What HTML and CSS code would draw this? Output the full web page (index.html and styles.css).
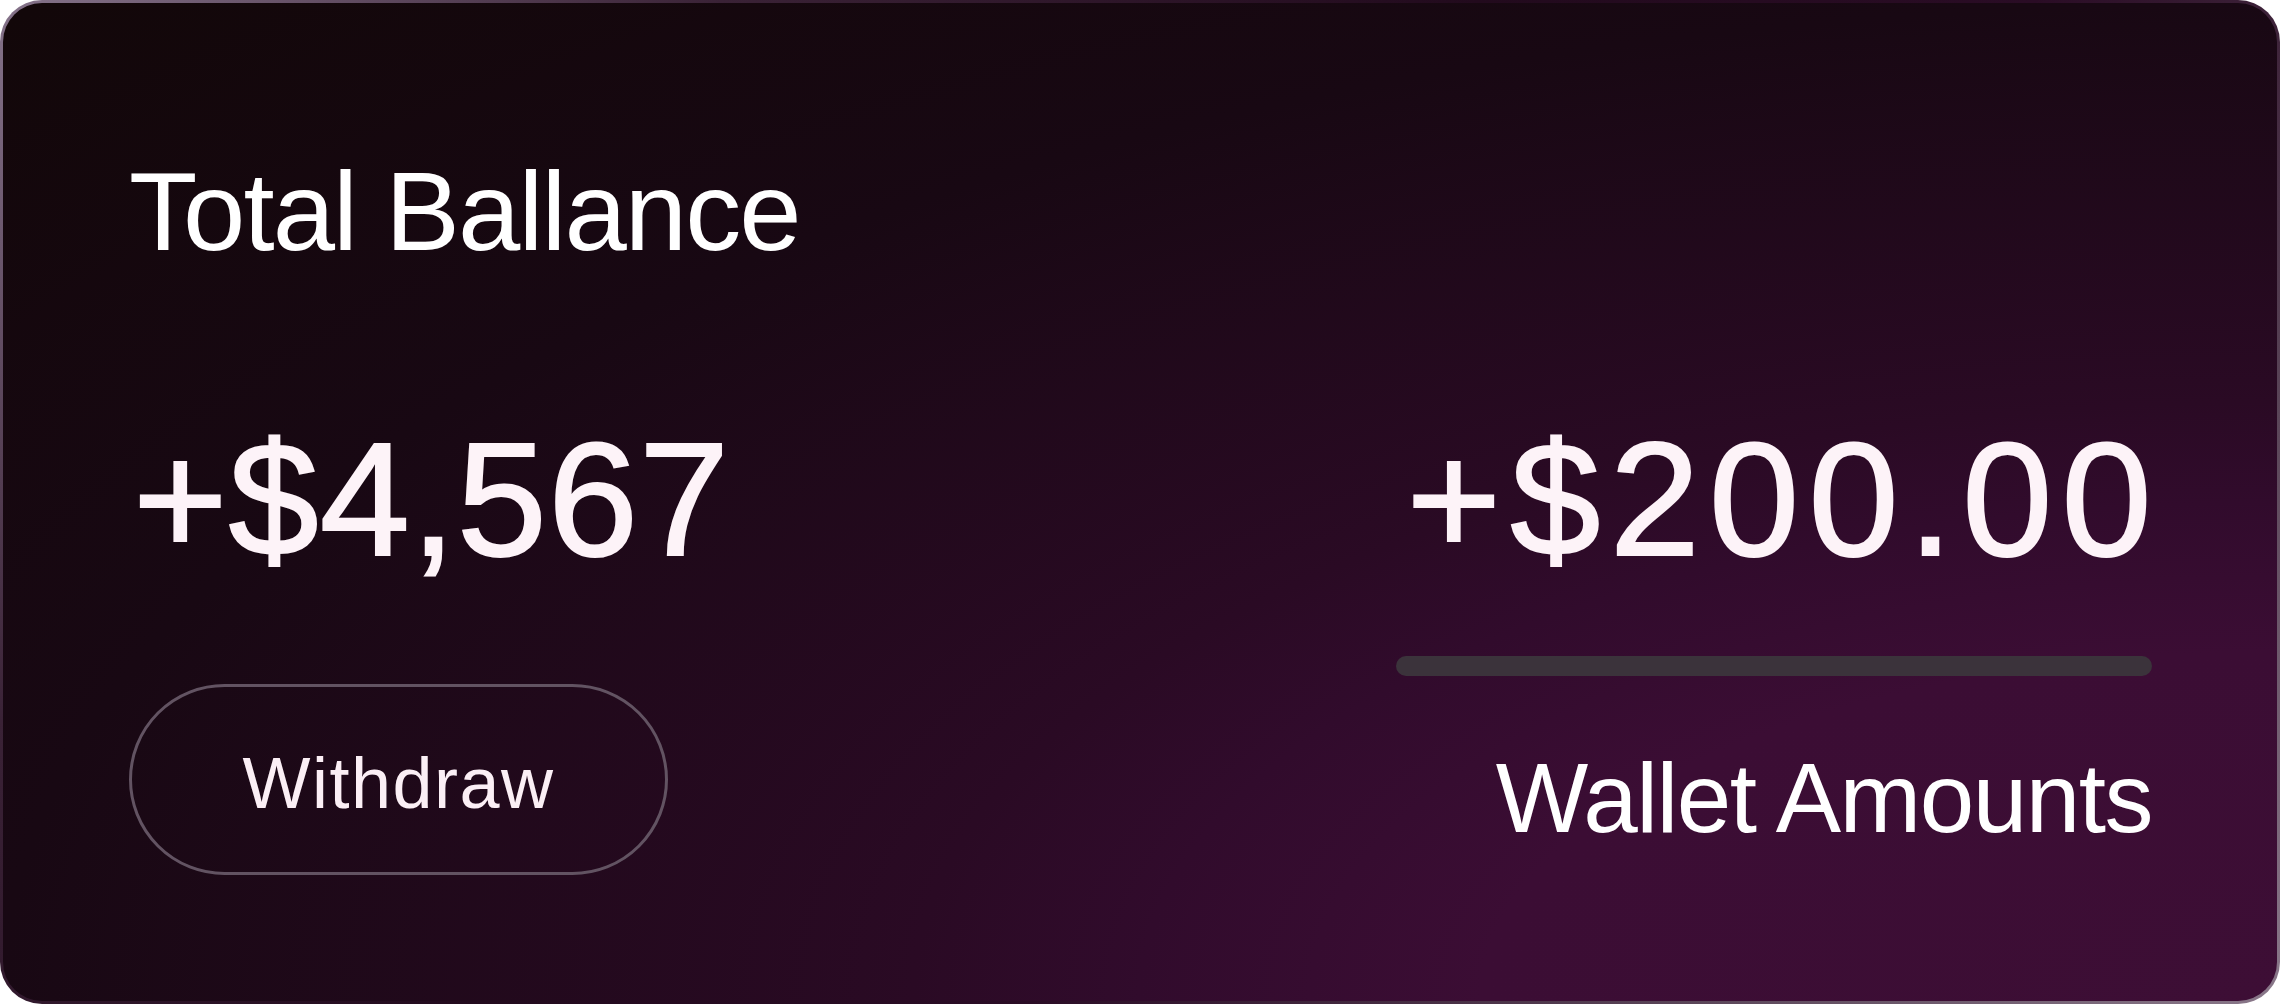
FILE: index.html
```html
<!DOCTYPE html>
<html lang="en">
<head>
<meta charset="utf-8">
<title>Total Ballance</title>
<link rel="stylesheet" href="styles.css">
</head>
<body>
  <section class="card">
    <div class="col col-left">
      <h1 class="title">Total Ballance</h1>
      <div class="amount amount-total">+$4,567</div>
      <button class="withdraw" type="button">Withdraw</button>
    </div>
    <div class="col col-right">
      <div class="amount amount-wallet">+$200.00</div>
      <div class="bar"></div>
      <div class="label">Wallet Amounts</div>
    </div>
  </section>
</body>
</html>
```

FILE: styles.css
```css
html, body {
  margin: 0;
  padding: 0;
  background: #ffffff;
}

body {
  font-family: "Liberation Sans", Arial, sans-serif;
}

.card {
  box-sizing: border-box;
  width: 2280px;
  height: 1004px;
  border: 3px solid transparent;
  border-radius: 42px;
  padding: 153px 125px 126px 126px;
  display: flex;
  justify-content: space-between;
  background:
    radial-gradient(100% 100% at 100% 100%,
      #3d0e35 0%,
      #3b0d34 35%,
      #310b2c 50%,
      #2a0a24 60%,
      #180813 100%,
      #120709 140%) padding-box,
    linear-gradient(135deg,
      #85738a 0%,
      #3a2236 22%,
      #220a1d 45%,
      #2a0c25 62%,
      #5a4558 82%,
      #8a788a 100%) border-box;
}

.col {
  display: flex;
  flex-direction: column;
}

.col-left {
  align-items: flex-start;
}

.col-right {
  align-items: flex-end;
  padding-top: 262px;
}

.title {
  margin: 0 0 150px 0;
  font-size: 112px;
  line-height: 1;
  font-weight: 400;
  letter-spacing: -1.9px;
  color: #ffffff;
}

.amount {
  font-size: 162px;
  line-height: 1;
  font-weight: 400;
  color: #fdf3f8;
  -webkit-text-stroke: 2px #fdf3f8;
  margin-bottom: 104px;
}

.amount-total {
  margin-left: 4px;
  letter-spacing: 1px;
}

.amount-wallet {
  margin: 0 -9px 0 0;
  letter-spacing: 9.3px;
}

.withdraw {
  box-sizing: border-box;
  width: 539px;
  height: 191px;
  border: 3px solid #625362;
  border-radius: 96px;
  background: transparent;
  color: #fbeff5;
  font-family: "Liberation Sans", Arial, sans-serif;
  font-size: 72px;
  line-height: 1;
  letter-spacing: 1.5px;
  padding: 6px 0 0 0;
  display: flex;
  align-items: center;
  justify-content: center;
}

.bar {
  width: 756px;
  height: 20px;
  margin-top: 76px;
  border-radius: 10px;
  background: #3b333b;
}

.label {
  margin-top: 73px;
  font-size: 98px;
  line-height: 1;
  letter-spacing: -1.5px;
  color: #ffffff;
}
```
